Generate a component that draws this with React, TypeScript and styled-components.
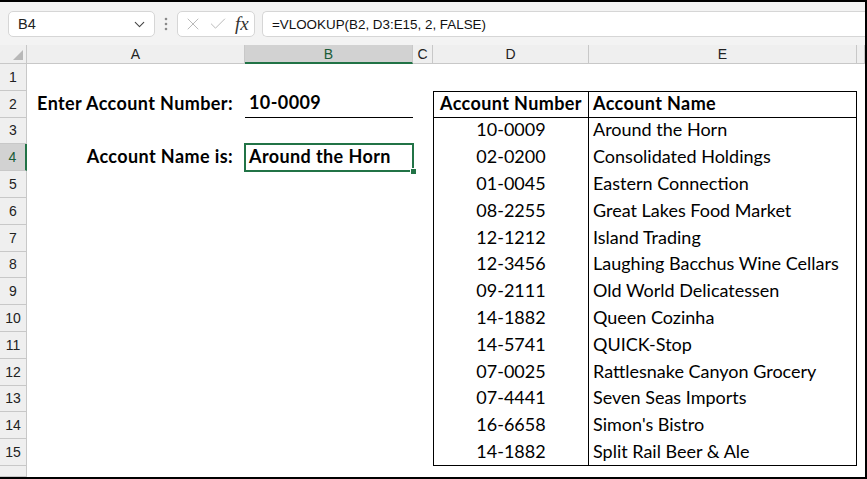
import styled, { createGlobalStyle } from "styled-components";
import { ChevronDown, X, Check } from "lucide-react";

const COLOR = {
  black: "#000000",
  green: "#217346",
  barBg: "#f3f3f3",
  headerBg: "#efefef",
  headerActive: "#d2d2d2",
  headerLine: "#c8c8c8",
  boxLine: "#d6d6d6",
  white: "#ffffff",
};

const CELL_FONT = `Lato, "Open Sans", "Liberation Sans", sans-serif`;
const UI_FONT = `"Liberation Sans", Arial, sans-serif`;

const GlobalStyle = createGlobalStyle`
  html, body {
    margin: 0;
    padding: 0;
    background: ${COLOR.white};
  }
  * { box-sizing: border-box; }
`;

const Window = styled.div`
  width: 867px;
  height: 479px;
  border-top: 2px solid ${COLOR.black};
  border-right: 2px solid ${COLOR.black};
  border-bottom: 2px solid ${COLOR.black};
  display: flex;
  flex-direction: column;
  overflow: hidden;
  background: ${COLOR.white};
`;

const FormulaBar = styled.div`
  height: 43px;
  flex: none;
  display: flex;
  align-items: center;
  padding: 1px 0 0 8px;
  background: ${COLOR.barBg};
  font-family: ${UI_FONT};
`;

const NameBox = styled.div`
  width: 147px;
  height: 26px;
  background: ${COLOR.white};
  border: 1px solid ${COLOR.boxLine};
  border-radius: 5px;
  display: flex;
  align-items: center;
  justify-content: space-between;
  padding: 0 6px 0 9px;
  font-size: 14.5px;
  color: #222;
`;

const Dots = styled.div`
  width: 22px;
  display: flex;
  justify-content: center;
`;

const FxBox = styled.div`
  width: 78px;
  height: 26px;
  background: ${COLOR.white};
  border: 1px solid ${COLOR.boxLine};
  border-radius: 5px;
  display: flex;
  align-items: center;
  padding: 0 0 0 5px;
  gap: 5px;
  color: #b4b4b4;
`;

const Fx = styled.span`
  font-family: "Liberation Serif", "Times New Roman", serif;
  font-style: italic;
  font-size: 19px;
  color: #333;
  margin-left: 2px;
`;

const FormulaInput = styled.div`
  flex: 1;
  height: 26px;
  margin-left: 7px;
  background: ${COLOR.white};
  border: 1px solid ${COLOR.boxLine};
  border-right: none;
  border-radius: 5px 0 0 5px;
  display: flex;
  align-items: center;
  padding-left: 9px;
  font-size: 13.4px;
  color: #111;
`;

const Sheet = styled.div`
  flex: 1;
  display: grid;
  grid-template-columns: 27px 218px 168px 20px 156px 268px 1fr;
  grid-template-rows: 19px repeat(15, 26.8px) 1fr;
`;

const Corner = styled.div`
  background: ${COLOR.headerBg};
  border-right: 1px solid ${COLOR.headerLine};
  border-bottom: 1px solid ${COLOR.headerLine};
  position: relative;
`;

const CornerTriangle = styled.div`
  position: absolute;
  right: 3px;
  bottom: 3px;
  width: 0;
  height: 0;
  border-left: 10px solid transparent;
  border-bottom: 10px solid #b8b8b8;
`;

const ColHeader = styled.div<{ $active?: boolean }>`
  background: ${(p) => (p.$active ? COLOR.headerActive : COLOR.headerBg)};
  border-right: 1px solid ${COLOR.headerLine};
  border-bottom: ${(p) =>
    p.$active ? `2px solid ${COLOR.green}` : `1px solid ${COLOR.headerLine}`};
  display: flex;
  align-items: center;
  justify-content: center;
  font-family: ${UI_FONT};
  font-size: 14px;
  color: ${(p) => (p.$active ? "#1a5c37" : "#222")};
`;

const RowHeader = styled.div<{ $active?: boolean }>`
  background: ${(p) => (p.$active ? COLOR.headerActive : COLOR.headerBg)};
  border-right: ${(p) =>
    p.$active ? `2px solid ${COLOR.green}` : `1px solid ${COLOR.headerLine}`};
  border-bottom: 1px solid ${COLOR.headerLine};
  display: flex;
  align-items: center;
  justify-content: center;
  font-family: ${UI_FONT};
  font-size: 14px;
  color: ${(p) => (p.$active ? "#1a5c37" : "#222")};
`;

type Edge = { top?: boolean; right?: boolean; bottom?: boolean; left?: boolean };

const Cell = styled.div<{
  $align?: "left" | "center" | "right";
  $bold?: boolean;
  $edge?: Edge;
}>`
  position: relative;
  display: flex;
  align-items: center;
  justify-content: ${(p) =>
    p.$align === "center" ? "center" : p.$align === "right" ? "flex-end" : "flex-start"};
  padding: 0 ${(p) => (p.$align === "right" ? "12px" : "4px")} 3px 4px;
  font-family: ${CELL_FONT};
  font-size: 18px;
  font-weight: ${(p) => (p.$bold ? 700 : 400)};
  letter-spacing: ${(p) => (p.$bold ? "0.4px" : "0")};
  color: ${COLOR.black};
  white-space: nowrap;
  border-top: ${(p) => (p.$edge?.top ? `1px solid ${COLOR.black}` : "none")};
  border-right: ${(p) => (p.$edge?.right ? `1px solid ${COLOR.black}` : "none")};
  border-bottom: ${(p) => (p.$edge?.bottom ? `1px solid ${COLOR.black}` : "none")};
  border-left: ${(p) => (p.$edge?.left ? `1px solid ${COLOR.black}` : "none")};
`;

const Selection = styled.div`
  position: absolute;
  inset: -1px -1px -1px -1px;
  border: 2px solid ${COLOR.green};
  pointer-events: none;
`;

const Handle = styled.div`
  position: absolute;
  right: -5px;
  bottom: -5px;
  width: 7px;
  height: 7px;
  background: ${COLOR.green};
  border: 1px solid ${COLOR.white};
`;

const accounts: [string, string][] = [
  ["10-0009", "Around the Horn"],
  ["02-0200", "Consolidated Holdings"],
  ["01-0045", "Eastern Connection"],
  ["08-2255", "Great Lakes Food Market"],
  ["12-1212", "Island Trading"],
  ["12-3456", "Laughing Bacchus Wine Cellars"],
  ["09-2111", "Old World Delicatessen"],
  ["14-1882", "Queen Cozinha"],
  ["14-5741", "QUICK-Stop"],
  ["07-0025", "Rattlesnake Canyon Grocery"],
  ["07-4441", "Seven Seas Imports"],
  ["16-6658", "Simon's Bistro"],
  ["14-1882", "Split Rail Beer & Ale"],
];

const columns = ["A", "B", "C", "D", "E", ""];

const DotsIcon = () => (
  <svg width="4" height="14" viewBox="0 0 4 14">
    <circle cx="2" cy="2" r="1.3" fill="#8a8a8a" />
    <circle cx="2" cy="7" r="1.3" fill="#8a8a8a" />
    <circle cx="2" cy="12" r="1.3" fill="#8a8a8a" />
  </svg>
);

const App = () => {
  const rows = Array.from({ length: 16 }, (_, i) => i + 1);

  const renderRow = (r: number) => {
    const last = r === 16;
    let a = "";
    let b: React.ReactNode = null;
    let bEdge: Edge | undefined;
    let aBold = false;
    if (r === 2) {
      a = "Enter Account Number:";
      aBold = true;
      b = "10-0009";
      bEdge = { bottom: true };
    }
    if (r === 4) {
      a = "Account Name is:";
      aBold = true;
      b = "Around the Horn";
    }

    let d = "";
    let e = "";
    let dEdge: Edge | undefined;
    let eEdge: Edge | undefined;
    let tableBold = false;
    if (r === 2) {
      d = "Account Number";
      e = "Account Name";
      tableBold = true;
      dEdge = { top: true, left: true, right: true, bottom: true };
      eEdge = { top: true, right: true, bottom: true };
    } else if (r >= 3 && r <= 15) {
      [d, e] = accounts[r - 3];
      dEdge = { left: true, right: true, bottom: r === 15 };
      eEdge = { right: true, bottom: r === 15 };
    }

    return [
      <RowHeader key={`h${r}`} $active={r === 4}>
        {last ? "" : r}
      </RowHeader>,
      <Cell key={`a${r}`} $align="right" $bold={aBold}>
        {a}
      </Cell>,
      <Cell key={`b${r}`} $bold $edge={bEdge}>
        {b}
        {r === 4 && (
          <Selection>
            <Handle />
          </Selection>
        )}
      </Cell>,
      <Cell key={`c${r}`} />,
      <Cell key={`d${r}`} $align="center" $bold={tableBold} $edge={dEdge}>
        {d}
      </Cell>,
      <Cell key={`e${r}`} $bold={tableBold} $edge={eEdge}>
        {e}
      </Cell>,
      <Cell key={`f${r}`} />,
    ];
  };

  return (
    <>
      <GlobalStyle />
      <Window>
        <FormulaBar>
          <NameBox>
            B4
            <ChevronDown size={17} strokeWidth={1.5} color="#444" />
          </NameBox>
          <Dots>
            <DotsIcon />
          </Dots>
          <FxBox>
            <X size={20} strokeWidth={1.1} />
            <Check size={20} strokeWidth={1.1} />
            <Fx>fx</Fx>
          </FxBox>
          <FormulaInput>=VLOOKUP(B2, D3:E15, 2, FALSE)</FormulaInput>
        </FormulaBar>
        <Sheet>
          <Corner>
            <CornerTriangle />
          </Corner>
          {columns.map((c) => (
            <ColHeader key={c || "F"} $active={c === "B"}>
              {c}
            </ColHeader>
          ))}
          {rows.map(renderRow)}
        </Sheet>
      </Window>
    </>
  );
};

export default App;
